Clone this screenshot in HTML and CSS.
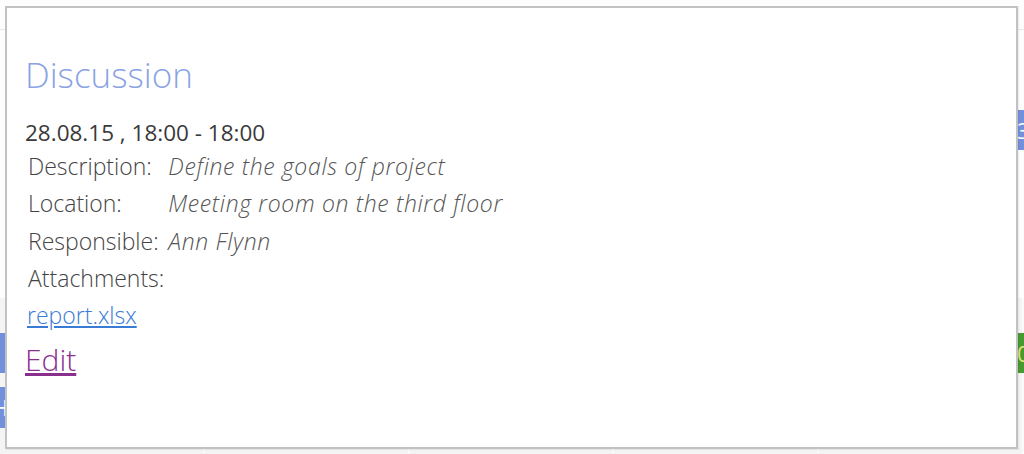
FILE: index.html
```html
<!DOCTYPE html>
<html>
<head>
<meta charset="utf-8">
<link rel="stylesheet" href="styles.css">
</head>
<body>
<div class="calendar">
  <div class="row row-head"></div>
  <div class="row row-white"></div>
  <div class="row row-grey">
    <div class="col"></div><div class="col"></div><div class="col"></div><div class="col"></div><div class="col"></div>
  </div>
  <div class="event ev-blue-right">3</div>
  <div class="event ev-green-right">0</div>
  <div class="event ev-blue-left1"></div>
  <div class="event ev-blue-left2">H</div>
</div>
<div class="popup">
  <h1 class="title">Discussion</h1>
  <div class="date">28.08.15 , 18:00 - 18:00</div>
  <table class="details">
    <tr><td class="label">Description:</td><td class="value">Define the goals of project</td></tr>
    <tr><td class="label">Location:</td><td class="value">Meeting room on the third floor</td></tr>
    <tr><td class="label">Responsible:</td><td class="value">Ann Flynn</td></tr>
    <tr><td class="label">Attachments:</td><td class="value"></td></tr>
  </table>
  <a class="file" href="#">report.xlsx</a>
  <div class="edit-row"><a class="edit" href="#">Edit</a></div>
</div>
</body>
</html>
```
FILE: styles.css
```css
html, body {
  margin: 0;
  padding: 0;
  width: 1024px;
  height: 454px;
  overflow: hidden;
  font-family: "Open Sans", "DejaVu Sans", sans-serif;
  background: #fdfdfd;
}
.calendar {
  position: relative;
  width: 1024px;
  height: 454px;
  display: flex;
  flex-direction: column;
}
.row-head {
  height: 29px;
  border-bottom: 1px solid #e9e9e9;
}
.row-white {
  height: 268px;
}
.row-grey {
  flex: 1;
  background: #f4f4f4;
  display: flex;
}
.col {
  flex: 1;
  border-right: 2px solid #fafafa;
}
.event {
  position: absolute;
  color: #fff;
  font-size: 22px;
  line-height: 40px;
  overflow: hidden;
}
.ev-blue-right {
  left: 1017px;
  top: 110px;
  width: 20px;
  height: 40px;
  background: #7390dc;
}
.ev-green-right {
  left: 1017px;
  top: 333px;
  width: 20px;
  height: 40px;
  background: #479a2f;
  color: #e8e27a;
}
.ev-blue-left1 {
  left: 0;
  top: 333px;
  width: 5px;
  height: 40px;
  background: #7390dc;
}
.ev-blue-left2 {
  left: -8px;
  top: 387px;
  width: 13px;
  height: 41px;
  background: #7390dc;
  text-align: right;
}
.popup {
  position: absolute;
  left: 5px;
  top: 6px;
  height: 439px;
  width: 991px;
  background: #fff;
  border: 2px solid #c2c2c2;
  box-shadow: 1px 1px 1px rgba(0,0,0,0.06);
  padding: 0 0 0 18px;
}
.title {
  margin: 45px 0 0 0;
  font-weight: 300;
  font-size: 35px;
  line-height: 44px;
  color: #8ba3e4;
}
.date {
  margin-top: 22px;
  font-size: 22.5px;
  color: #3a3a3a;
  line-height: 28px;
}
.details {
  border-collapse: collapse;
  margin-left: 1px;
  font-size: 23px;
  color: #444;
}
.details td {
  padding: 0 2px;
  height: 37.5px;
  white-space: nowrap;
}
.details .label {
  font-weight: 300;
}
.details .value {
  font-style: italic;
  font-weight: 300;
  color: #555;
  padding-left: 2px;
  letter-spacing: 0.65px;
}
.file {
  display: block;
  margin-left: 2px;
  font-size: 23px;
  line-height: 36px;
  font-weight: 300;
  color: #3a7bd5;
  width: max-content;
}
.edit-row {
  margin-top: 7px;
  line-height: 40px;
}
.edit {
  font-size: 30px;
  font-weight: 300;
  color: #8b2f8e;
}
```
